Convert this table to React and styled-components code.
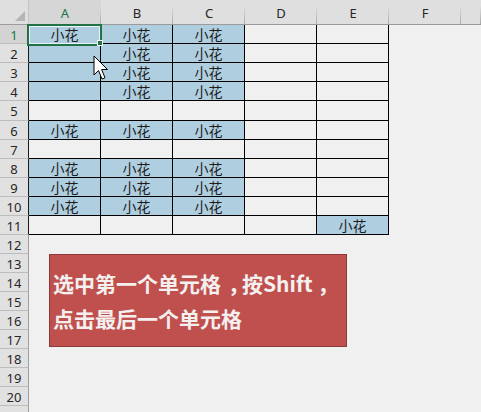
import React from 'react';
import styled, { createGlobalStyle, css } from 'styled-components';

const GlobalStyle = createGlobalStyle`
  html, body {
    margin: 0;
    padding: 0;
    background: #f0f0f0;
    overflow: hidden;
  }
  body {
    font-family: "Noto Sans", "Noto Sans CJK SC", sans-serif;
  }
`;

const COLS = ['A', 'B', 'C', 'D', 'E', 'F'];
const HEIGHTS = [19, 19, 19, 19, 20, 19, 19, 19, 19, 19, 19, 19, 19, 19, 19, 19, 19, 19, 19, 19, 19];

// which cells are blue, and which hold text
const FILLED = {
  1: 'ABC', 2: 'ABC', 3: 'ABC', 4: 'ABC', 6: 'ABC', 8: 'ABC', 9: 'ABC', 10: 'ABC', 11: 'E',
};
const TEXT = {
  1: 'ABC', 2: 'BC', 3: 'BC', 4: 'BC', 6: 'ABC', 8: 'ABC', 9: 'ABC', 10: 'ABC', 11: 'E',
};

const Sheet = styled.div`
  position: relative;
  display: grid;
  grid-template-columns: 29px repeat(6, 72px) 1fr;
  grid-template-rows: ${p => p.$rows};
  width: 481px;
  height: 412px;
  overflow: hidden;
  background: #f0f0f0;
`;

const Corner = styled.div`
  position: relative;
  background: #dfdfdf;
  border-right: 1px solid #c4c4c4;
  border-bottom: 1px solid #9b9b9b;
  box-sizing: border-box;

  &::after {
    content: '';
    position: absolute;
    right: 3px;
    bottom: 3px;
    width: 0;
    height: 0;
    border-left: 10px solid transparent;
    border-bottom: 10px solid #b5b5b5;
  }
`;

const ColHead = styled.div`
  position: relative;
  display: flex;
  justify-content: center;
  align-items: flex-end;
  padding-bottom: 2px;
  box-sizing: border-box;
  background: ${p => (p.$active ? '#d6d6d6' : '#dfdfdf')};
  border-bottom: 1px solid #9b9b9b;
  font-family: "Noto Sans", sans-serif;
  font-size: 13px;
  color: ${p => (p.$active ? '#217346' : '#262626')};

  &::after {
    content: '';
    position: absolute;
    right: 0;
    top: 6px;
    bottom: 0;
    width: 1px;
    background: linear-gradient(#dfdfdf, #a8a8a8);
  }
`;

const RowHead = styled.div`
  display: flex;
  justify-content: center;
  align-items: center;
  padding-top: 2px;
  box-sizing: border-box;
  background: ${p => (p.$active ? '#d3d3d3' : '#e1e1e1')};
  border-right: 1px solid ${p => (p.$edge ? '#1a1a1a' : '#9e9e9e')};
  border-bottom: 1px solid #bdbdbd;
  font-family: "Noto Sans", sans-serif;
  font-size: 13px;
  line-height: 1;
  color: ${p => (p.$active ? '#217346' : '#262626')};
`;

const Cell = styled.div`
  display: flex;
  justify-content: center;
  align-items: center;
  box-sizing: border-box;
  background: ${p => (p.$fill ? '#afcfe1' : 'transparent')};
  font-family: "Noto Sans CJK SC", sans-serif;
  font-size: 14px;
  line-height: 1;
  color: #1e1e1e;
  ${p => p.$bordered && css`
    border-right: 1px solid #000;
    border-bottom: 1px solid #000;
  `}
`;

const Selection = styled.div`
  position: absolute;
  left: 27px;
  top: 24px;
  width: 75px;
  height: 22px;
  box-sizing: border-box;
  border: 2px solid #217346;
  box-shadow: inset 0 0 0 1px #e8f1f5;
  pointer-events: none;
`;

const FillHandle = styled.div`
  position: absolute;
  left: 97px;
  top: 40px;
  width: 6px;
  height: 6px;
  box-sizing: border-box;
  background: #217346;
  border: 1px solid #f4f4f4;
`;

const Cursor = styled.svg`
  position: absolute;
  left: 93px;
  top: 55px;
`;

const Note = styled.div`
  position: absolute;
  left: 49px;
  top: 254px;
  width: 298px;
  height: 93px;
  box-sizing: border-box;
  padding: 11px 0 0 3px;
  background: #c0504d;
  border: 1px solid #8c3a37;
  font-family: "Noto Sans CJK SC", sans-serif;
  font-weight: 700;
  font-size: 21px;
  line-height: 35px;
  color: #f3f0ef;
  white-space: nowrap;
`;

// full-width comma drawn centred in its box, as the reference font does
const Comma = styled.span`
  padding-left: ${p => p.$shift}px;
  margin-right: -${p => p.$shift}px;
`;

export default function App() {
  const rows = `25px ${HEIGHTS.map(h => `${h}px`).join(' ')}`;
  const cells = [];

  cells.push(<Corner key="corner" />);
  COLS.forEach(c => cells.push(<ColHead key={`h${c}`} $active={c === 'A'}>{c}</ColHead>));
  cells.push(<ColHead key="hG" />);

  HEIGHTS.forEach((_, i) => {
    const r = i + 1;
    const inTable = r <= 11;
    cells.push(
      <RowHead key={`r${r}`} $active={r === 1} $edge={inTable}>{r}</RowHead>
    );
    COLS.forEach(c => {
      const bordered = inTable && c !== 'F';
      const fill = (FILLED[r] || '').includes(c);
      const text = (TEXT[r] || '').includes(c) ? '小花' : '';
      cells.push(
        <Cell key={`${c}${r}`} $bordered={bordered} $fill={fill}>{text}</Cell>
      );
    });
    cells.push(<Cell key={`G${r}`} />);
  });

  return (
    <>
      <GlobalStyle />
      <Sheet $rows={rows}>
        {cells}
        <Selection />
        <FillHandle />
        <Cursor width="16" height="27" viewBox="0 0 16 27">
          <path
            d="M1 1 V20 L5.5 15.5 L9 24 L12 22.8 L8.6 14.5 H14.5 Z"
            fill="#fff"
            stroke="#000"
            strokeWidth="1"
            strokeLinejoin="miter"
          />
        </Cursor>
        <Note>
          选中第一个单元格<Comma $shift={7}>，</Comma>按Shift<Comma $shift={5}>，</Comma><br />
          点击最后一个单元格
        </Note>
      </Sheet>
    </>
  );
}
